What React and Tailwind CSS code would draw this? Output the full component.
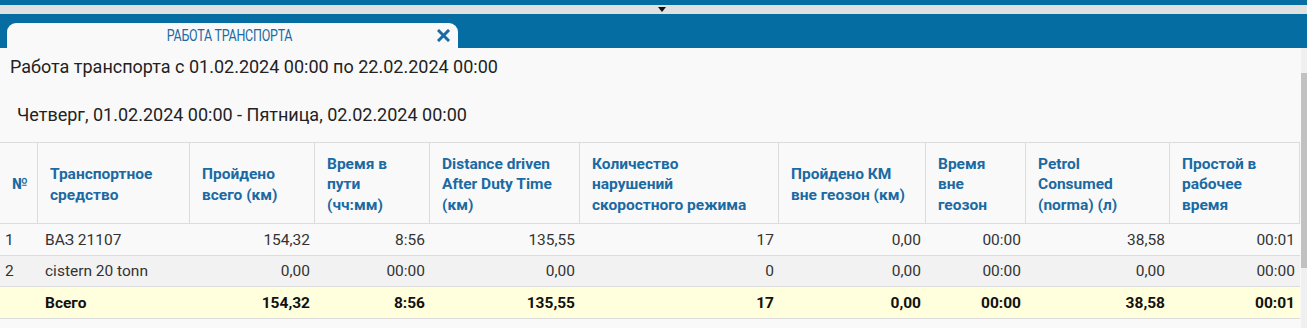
import React from "react";

const columns = [
  { key: "n", title: "№", w: "w-[38px]", align: "left" },
  { key: "name", title: "Транспортное средство", w: "w-[152px]", align: "left" },
  { key: "total", title: "Пройдено всего (км)", w: "w-[125px]", align: "right" },
  { key: "time", title: "Время в пути (чч:мм)", w: "w-[115px]", align: "right" },
  { key: "after", title: "Distance driven After Duty Time (км)", w: "w-[150px]", align: "right" },
  { key: "speed", title: "Количество нарушений скоростного режима", w: "w-[199px]", align: "right" },
  { key: "outKm", title: "Пройдено КМ вне геозон (км)", w: "w-[147px]", align: "right" },
  { key: "outTime", title: "Время вне геозон", w: "w-[100px]", align: "right" },
  { key: "petrol", title: "Petrol Consumed (norma) (л)", w: "w-[144px]", align: "right" },
  { key: "idle", title: "Простой в рабочее время", w: "w-[130px]", align: "right" },
];

const rows = [
  ["1", "ВАЗ 21107", "154,32", "8:56", "135,55", "17", "0,00", "00:00", "38,58", "00:01"],
  ["2", "cistern 20 tonn", "0,00", "00:00", "0,00", "0", "0,00", "00:00", "0,00", "00:00"],
];

const totals = ["", "Всего", "154,32", "8:56", "135,55", "17", "0,00", "00:00", "38,58", "00:01"];

// header titles wrap like the original report
const headerLines = {
  n: ["№"],
  name: ["Транспортное", "средство"],
  total: ["Пройдено", "всего (км)"],
  time: ["Время в", "пути", "(чч:мм)"],
  after: ["Distance driven", "After Duty Time", "(км)"],
  speed: ["Количество", "нарушений", "скоростного режима"],
  outKm: ["Пройдено КМ", "вне геозон (км)"],
  outTime: ["Время", "вне", "геозон"],
  petrol: ["Petrol", "Consumed", "(norma) (л)"],
  idle: ["Простой в", "рабочее", "время"],
};

const Row = ({ cells, className, bold }) => (
  <div className={`flex h-[31.5px] items-center pt-[2px] border-b border-[#dcdcdc] ${className}`}>
    {cells.map((c, i) => (
      <div
        key={i}
        className={`${columns[i].w} shrink-0 px-[5px] whitespace-nowrap ${
          columns[i].align === "right" ? "text-right" : "text-left"
        } ${i === 1 ? "pl-[7px]" : ""} ${bold ? "font-bold" : ""}`}
      >
        {c}
      </div>
    ))}
  </div>
);

export default function App() {
  return (
    <div
      className="w-[1307px] h-[328px] overflow-hidden bg-[#f9f9f9] flex flex-col"
      style={{ fontFamily: "Roboto, 'Noto Sans', sans-serif" }}
    >
      <div className="h-[5px] bg-[#066da2]" />
      <div className="h-[9px] bg-[#e0e0e0] flex justify-center">
        <div className="ml-[16px] mt-[2px] w-0 h-0 border-l-[4px] border-r-[4px] border-t-[5px] border-l-transparent border-r-transparent border-t-[#111]" />
      </div>
      <div className="h-[34px] bg-[#066da2] flex items-end pl-[7px]">
        <div className="relative w-[451px] h-[25px] bg-[#f9f9f9] rounded-t-[9px] flex items-center justify-center">
          <span className="inline-block text-[#1a6aa3] text-[16px] tracking-[-0.3px] scale-x-[0.78] mr-[6px]">
            РАБОТА ТРАНСПОРТА
          </span>
          <svg className="absolute right-[8px] top-[6px]" width="13" height="13" viewBox="0 0 13 13">
            <path d="M2 2 L11 11 M11 2 L2 11" stroke="#1a6aa3" strokeWidth="3" strokeLinecap="square" />
          </svg>
        </div>
      </div>
      <div className="flex flex-1 min-h-0">
        <div className="w-[1301px] flex flex-col text-[#222]">
          <div className="pl-[10px] pt-[8px] text-[18px] leading-[22px]">
            Работа транспорта с 01.02.2024 00:00 по 22.02.2024 00:00
          </div>
          <div className="pl-[17px] pt-[26px] text-[18px] leading-[22px]">
            Четверг, 01.02.2024 00:00 - Пятница, 02.02.2024 00:00
          </div>
          <div className="mt-[16px] w-[1300px] text-[15.5px]">
            <div className="flex h-[82px] border-t border-b border-[#dcdcdc] text-[#1a6aa3] font-bold leading-[20.5px]">
              {columns.map((c) => (
                <div
                  key={c.key}
                  className={`${c.w} shrink-0 flex flex-col justify-center pt-[3px] px-[12px] border-r border-[#dcdcdc]`}
                >
                  {headerLines[c.key].map((l) => (
                    <div key={l} className="whitespace-nowrap">{l}</div>
                  ))}
                </div>
              ))}
            </div>
            <div className="text-[#333]">
              <Row cells={rows[0]} className="bg-[#f9f9f9]" />
              <Row cells={rows[1]} className="bg-[#f2f2f2]" />
              <Row cells={totals} className="bg-[#ffffdd] text-[#111]" bold />
            </div>
          </div>
        </div>
        <div className="w-[6px] bg-[#f0f0f0] flex flex-col">
          <div className="mt-[25px] h-[195px] bg-[#c1c1c1]" />
        </div>
      </div>
    </div>
  );
}
